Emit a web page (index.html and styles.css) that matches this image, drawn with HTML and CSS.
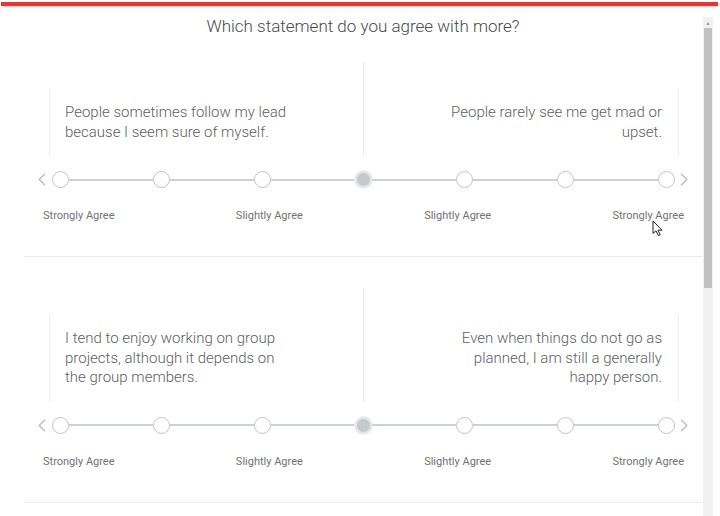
FILE: index.html
```html
<!DOCTYPE html>
<html lang="en">
<head>
<meta charset="utf-8">
<title>Survey</title>
<link rel="stylesheet" href="styles.css">
</head>
<body>
<div class="topbar"></div>
<div class="window">
  <main class="content">
    <h1 class="survey-title">Which statement do you agree with more?</h1>

    <section class="question question--first">
      <div class="statements">
        <div class="col col--left"><p class="stmt stmt--left">People sometimes follow my lead because I seem sure of myself.</p></div>
        <div class="col col--right"><p class="stmt stmt--right">People rarely see me get mad or upset.</p></div>
      </div>
      <div class="scale">
        <svg class="chev" width="8" height="13" viewBox="0 0 8 13"><path d="M7 0.8 L1.2 6.5 L7 12.2" fill="none" stroke="#b9bcbc" stroke-width="1.3"/></svg>
        <span class="dot"></span><span class="seg"></span>
        <span class="dot"></span><span class="seg"></span>
        <span class="dot"></span><span class="seg"></span>
        <span class="dot dot--selected"></span><span class="seg"></span>
        <span class="dot"></span><span class="seg"></span>
        <span class="dot"></span><span class="seg"></span>
        <span class="dot"></span>
        <svg class="chev chev--right" width="8" height="13" viewBox="0 0 8 13"><path d="M1 0.8 L6.8 6.5 L1 12.2" fill="none" stroke="#b9bcbc" stroke-width="1.3"/></svg>
      </div>
      <div class="labels">
        <span>Strongly Agree</span><span>Slightly Agree</span><span>Slightly Agree</span><span>Strongly Agree</span>
      </div>
    </section>

    <section class="question">
      <div class="statements">
        <div class="col col--left"><p class="stmt stmt--left">I tend to enjoy working on group projects, although it depends on the group members.</p></div>
        <div class="col col--right"><p class="stmt stmt--right">Even when things do not go as planned, I am still a generally happy person.</p></div>
      </div>
      <div class="scale">
        <svg class="chev" width="8" height="13" viewBox="0 0 8 13"><path d="M7 0.8 L1.2 6.5 L7 12.2" fill="none" stroke="#b9bcbc" stroke-width="1.3"/></svg>
        <span class="dot"></span><span class="seg"></span>
        <span class="dot"></span><span class="seg"></span>
        <span class="dot"></span><span class="seg"></span>
        <span class="dot dot--selected"></span><span class="seg"></span>
        <span class="dot"></span><span class="seg"></span>
        <span class="dot"></span><span class="seg"></span>
        <span class="dot"></span>
        <svg class="chev chev--right" width="8" height="13" viewBox="0 0 8 13"><path d="M1 0.8 L6.8 6.5 L1 12.2" fill="none" stroke="#b9bcbc" stroke-width="1.3"/></svg>
      </div>
      <div class="labels">
        <span>Strongly Agree</span><span>Slightly Agree</span><span>Slightly Agree</span><span>Strongly Agree</span>
      </div>
    </section>
  </main>
  <div class="scrollbar">
    <span class="sb-arrow"></span>
    <span class="sb-thumb"></span>
  </div>
</div>
<svg class="cursor" width="12" height="17" viewBox="0 0 12 17"><path d="M1 1 L1 13.5 L4 10.8 L6.3 15.6 L8.2 14.8 L6 10.2 L10 10.2 Z" fill="#fff" stroke="#222" stroke-width="1" stroke-linejoin="round"/></svg>
</body>
</html>
```

FILE: styles.css
```css
html, body {
  margin: 0;
  padding: 0;
  background: #ffffff;
}

body {
  width: 720px;
  height: 516px;
  overflow: hidden;
  position: relative;
  font-family: Roboto, "Liberation Sans", Arial, sans-serif;
  color: #6b6b6b;
}

.topbar {
  height: 4px;
  margin: 2px 2px 0 1px;
  background: #e8372a;
  box-shadow: 0 1px 2px rgba(0, 0, 0, 0.18);
}

.window {
  display: flex;
  align-items: flex-start;
}

.content {
  width: 679px;
  padding-left: 24px;
  box-sizing: content-box;
}

.survey-title {
  margin: 0;
  padding-top: 10px;
  font-size: 17px;
  line-height: 20px;
  font-weight: 300;
  color: #4a4a4a;
  text-align: center;
  width: 678px;
}

.question {
  width: 678px;
  padding-top: 31px;
  padding-bottom: 33px;
  border-bottom: 1px solid #ececec;
}

.question--first {
  padding-top: 26px;
}

.statements {
  display: flex;
}

.col {
  box-sizing: border-box;
  padding-top: 26px;
  display: flex;
}

.col--left {
  width: 340px;
  padding-left: 25px;
  border-right: 1px solid #e8e8e8;
}

.col--right {
  flex: 1;
  padding-right: 23px;
  justify-content: flex-end;
}

.stmt {
  margin: 0;
  width: 228px;
  font-size: 15px;
  line-height: 19.5px;
  font-weight: 300;
  color: #5e5e5e;
}

.stmt--left {
  padding: 15px 0 14px 15px;
  border-left: 1px solid #ededed;
}

.stmt--right {
  padding: 15px 16px 14px 0;
  border-right: 1px solid #ededed;
  text-align: right;
}

.scale {
  display: flex;
  align-items: center;
  margin-top: 15px;
  margin-left: 14px;
  height: 17px;
}

.chev {
  display: block;
  margin-right: 6px;
}

.chev--right {
  margin-right: 0;
  margin-left: 5px;
}

.dot {
  box-sizing: border-box;
  width: 17px;
  height: 17px;
  border-radius: 50%;
  border: 1.5px solid #c0c4c4;
  background: #ffffff;
  flex: none;
}

.dot--selected {
  background: #c6c9c9;
  border: 2px solid #e4e6e6;
  box-shadow: 0 0 0 1px #eef0f0;
}

.seg {
  width: 84px;
  height: 2px;
  background: #cdd1d0;
  flex: none;
}

.labels {
  display: flex;
  justify-content: space-between;
  margin: 21px 18px 0 19px;
  font-size: 11px;
  line-height: 14px;
  color: #727272;
}

.scrollbar {
  margin-top: 11px;
  width: 10px;
  height: 499px;
  background: #f1f1f1;
  position: relative;
  display: flex;
  flex-direction: column;
  align-items: center;
}

.sb-arrow {
  margin-top: 5px;
  width: 0;
  height: 0;
  border-left: 2.5px solid transparent;
  border-right: 2.5px solid transparent;
  border-bottom: 3px solid #a3a3a3;
}

.sb-thumb {
  margin-top: 3px;
  width: 8px;
  height: 260px;
  background: #c1c1c1;
}

.cursor {
  position: absolute;
  left: 652px;
  top: 220px;
}
```
